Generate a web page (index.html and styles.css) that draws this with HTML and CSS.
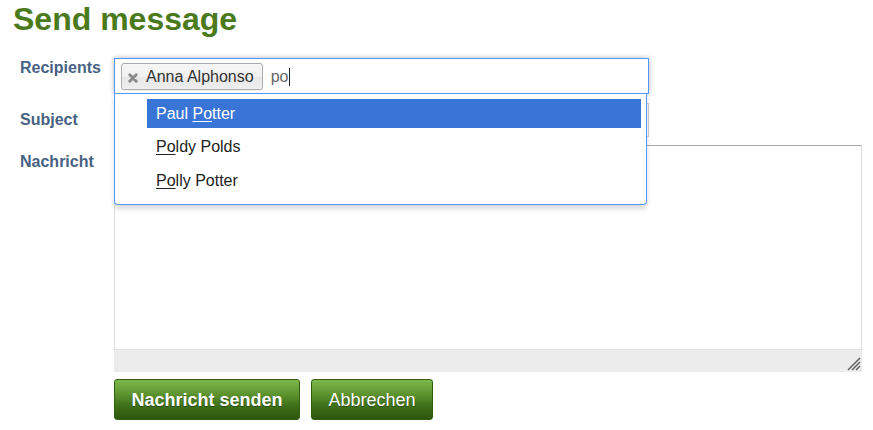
FILE: index.html
```html
<!DOCTYPE html>
<html lang="en">
<head>
<meta charset="utf-8">
<title>Send message</title>
<link rel="stylesheet" href="styles.css">
</head>
<body>
<h1 class="title">Send message</h1>
<form class="form">
  <div class="row row-recipients">
    <label class="label label-top">Recipients</label>
    <div class="chosen">
      <div class="choices">
        <span class="token"><svg class="token-x" width="10" height="10" viewBox="0 0 10 10"><path d="M1.8 1.8 L8.2 8.2 M8.2 1.8 L1.8 8.2" stroke="#8a8a8a" stroke-width="3" stroke-linecap="round"/></svg>Anna Alphonso</span>
        <span class="search">po<span class="caret"></span></span>
      </div>
      <div class="drop">
        <ul class="results">
          <li class="result is-active">Paul <u>Po</u>tter</li>
          <li class="result"><u>Po</u>ldy Polds</li>
          <li class="result"><u>Po</u>lly Potter</li>
        </ul>
      </div>
    </div>
  </div>
  <div class="row">
    <label class="label">Subject</label>
    <input class="text-input" type="text">
  </div>
  <div class="row">
    <label class="label">Nachricht</label>
    <div class="editor">
      <div class="editor-area"></div>
      <div class="editor-status">
        <svg class="grip" width="14" height="14" viewBox="0 0 14 14">
          <path d="M13 1 L1 13 M13 5 L5 13 M13 9 L9 13" stroke="#666" stroke-width="1.6" fill="none"/>
        </svg>
      </div>
    </div>
  </div>
  <div class="actions">
    <button class="btn btn-primary" type="button">Nachricht senden</button>
    <button class="btn" type="button">Abbrechen</button>
  </div>
</form>
</body>
</html>
```
FILE: styles.css
```css
html, body {
  margin: 0;
  padding: 0;
  background: #fff;
}
body {
  font-family: "Liberation Sans", Arial, sans-serif;
  font-size: 16px;
  color: #222;
}
.title {
  margin: 1px 0 0 13px;
  font-size: 32px;
  line-height: 36px;
  font-weight: bold;
  color: #4b7a1d;
}
.form {
  margin-top: 21px;
  display: flex;
  flex-direction: column;
}
.row {
  display: grid;
  grid-template-columns: 94px auto;
  padding-left: 20px;
  align-items: start;
}
.row + .row {
  margin-top: 9px;
}
.row:nth-child(3) {
  margin-top: 8px;
}
.label {
  font-size: 16px;
  line-height: 18px;
  font-weight: bold;
  color: #476282;
  padding-top: 8px;
}
.label-top {
  padding-top: 1px;
}
.chosen {
  position: relative;
  width: 535px;
  z-index: 5;
}
.choices {
  box-sizing: border-box;
  height: 36px;
  border: 1px solid #5897fb;
  background: #fff;
  padding: 4px 6px;
  display: flex;
  align-items: flex-start;
  gap: 8px;
  box-shadow: 0 0 5px rgba(0, 0, 0, 0.3);
}
.token {
  box-sizing: border-box;
  height: 27px;
  display: inline-flex;
  align-items: center;
  padding: 3px 8px 3px 6px;
  border: 1px solid #aaa;
  border-radius: 3px;
  background: linear-gradient(#f4f4f4 20%, #f0f0f0 50%, #e8e8e8 52%, #eee 100%);
  box-shadow: inset 0 0 2px #fff, 0 1px 0 rgba(0, 0, 0, 0.05);
  line-height: 19px;
  color: #333;
  white-space: nowrap;
}
.token-x {
  display: block;
  margin: 2px 8px 0 0;
}
.search {
  line-height: 19px;
  padding-top: 4px;
  color: #666;
  display: inline-flex;
  align-items: center;
}
.caret {
  display: inline-block;
  width: 1px;
  height: 18px;
  background: #222;
  margin-left: 1px;
}
.drop {
  position: absolute;
  left: 0;
  top: 36px;
  box-sizing: border-box;
  width: 533px;
  background: #fff;
  border: 1px solid #5897fb;
  border-top: 0;
  border-radius: 0 0 4px 4px;
  box-shadow: 0 4px 5px rgba(0, 0, 0, 0.15);
}
.results {
  list-style: none;
  margin: 0 5px 0 32px;
  padding: 5px 0 9px;
}
.result {
  line-height: 19px;
  padding: 5px 9px;
  color: #222;
}
.result + .result {
  margin-top: 4.3px;
}
.result.is-active {
  background: #3875d7;
  color: #fff;
}
.result u {
  text-decoration-thickness: 1px;
  text-underline-offset: 2px;
}
.text-input {
  box-sizing: border-box;
  width: 535px;
  height: 34px;
  margin: 0;
  border: 1px solid #ccc;
  background: #fff;
  font: inherit;
}
.editor {
  box-sizing: border-box;
  width: 748px;
}
.editor-area {
  box-sizing: border-box;
  height: 204px;
  border: 1px solid #ddd;
  border-top-color: #aaa;
  border-bottom: 0;
  background: #fff;
}
.editor-status {
  height: 23px;
  background: #ececec;
  border-top: 1px solid #e0e0e0;
  box-sizing: border-box;
  display: flex;
  justify-content: flex-end;
  align-items: flex-end;
}
.grip {
  display: block;
  margin: 0 1px 1px 0;
}
.actions {
  display: flex;
  gap: 11px;
  margin: 7px 0 0 114px;
}
.btn {
  box-sizing: border-box;
  height: 41px;
  padding: 1px 0 0;
  font-family: "Liberation Sans", Arial, sans-serif;
  font-size: 18px;
  line-height: 21px;
  text-align: center;
  white-space: nowrap;
  color: #fff;
  border: 1px solid #335e12;
  border-radius: 3px;
  background: linear-gradient(#7cb84a 0%, #5f9530 35%, #3f7119 65%, #2c560b 100%);
  text-shadow: 0 1px 1px rgba(0, 0, 0, 0.35);
  cursor: pointer;
}
.btn-primary {
  font-weight: bold;
  width: 186px;
}
.btn:not(.btn-primary) {
  width: 122px;
}
```
